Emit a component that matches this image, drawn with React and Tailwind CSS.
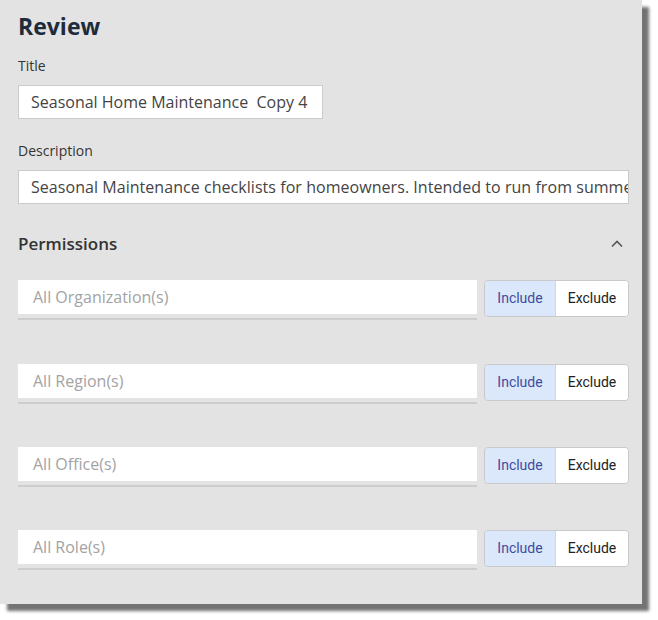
import React from "react";

const rows = ["All Organization(s)", "All Region(s)", "All Office(s)", "All Role(s)"];
const gaps = ["", "mt-[44px]", "mt-[43px]", "mt-[43px]"];

function PermissionRow({ placeholder, gap }) {
  return (
    <div className={`flex items-start ${gap}`}>
      <div className="w-[459px]">
        <div className="h-[34px] bg-white flex items-center pl-[15px] text-[16px] text-[#a3a3a3]">
          {placeholder}
        </div>
        <div className="mt-[4px] h-[2px] bg-[#cdcdcd]" />
      </div>
      <div className="ml-[7px] flex h-[37px] w-[145px] rounded-[4px] border border-[#c9c9c9] overflow-hidden font-['Roboto',sans-serif] text-[14px]">
        <div className="w-[71px] bg-[#dbe8fb] text-[#3f4ca0] flex items-center justify-center border-r border-[#d6d6d6]">
          Include
        </div>
        <div className="flex-1 bg-white text-[#222] flex items-center justify-center">Exclude</div>
      </div>
    </div>
  );
}

export default function App() {
  return (
    <div className="min-h-screen bg-white font-['Open_Sans',sans-serif]">
      <div className="w-[642px] h-[604px] bg-[#e3e3e3] pl-[18px] pr-[13px] pt-[11px] shadow-[7px_7px_3px_rgba(0,0,0,0.55)]">
        <h1 className="text-[23px] leading-[30px] font-bold text-[#1d2b3a]">Review</h1>

        <label className="block mt-[15px] text-[14px] leading-[20px] text-[#333]">Title</label>
        <div className="mt-[9px] w-[305px] h-[34px] bg-white border border-[#cbcbcb] flex items-center pl-[12px] text-[16px] text-[#444] whitespace-pre">
          Seasonal Home Maintenance  Copy 4
        </div>

        <label className="block mt-[22px] text-[14px] leading-[20px] text-[#333]">Description</label>
        <div className="mt-[9px] w-[611px] h-[34px] bg-white border border-[#cbcbcb] flex items-center pl-[12px] pr-[12px] text-[16px] text-[#444] whitespace-nowrap overflow-hidden tracking-[0.05px]">
          Seasonal Maintenance checklists for homeowners. Intended to run from summer through winter.
        </div>

        <div className="mt-[27px] flex items-center justify-between h-[26px]">
          <h2 className="text-[17px] leading-[26px] font-semibold text-[#333]">Permissions</h2>
          <svg width="12" height="8" viewBox="0 0 12 8" className="mr-[6px]">
            <path d="M1 6.5 L6 1.5 L11 6.5" fill="none" stroke="#555" strokeWidth="1.6" />
          </svg>
        </div>

        <div className="mt-[23px]">
          {rows.map((r, i) => (
            <PermissionRow key={r} placeholder={r} gap={gaps[i]} />
          ))}
        </div>
      </div>
    </div>
  );
}
